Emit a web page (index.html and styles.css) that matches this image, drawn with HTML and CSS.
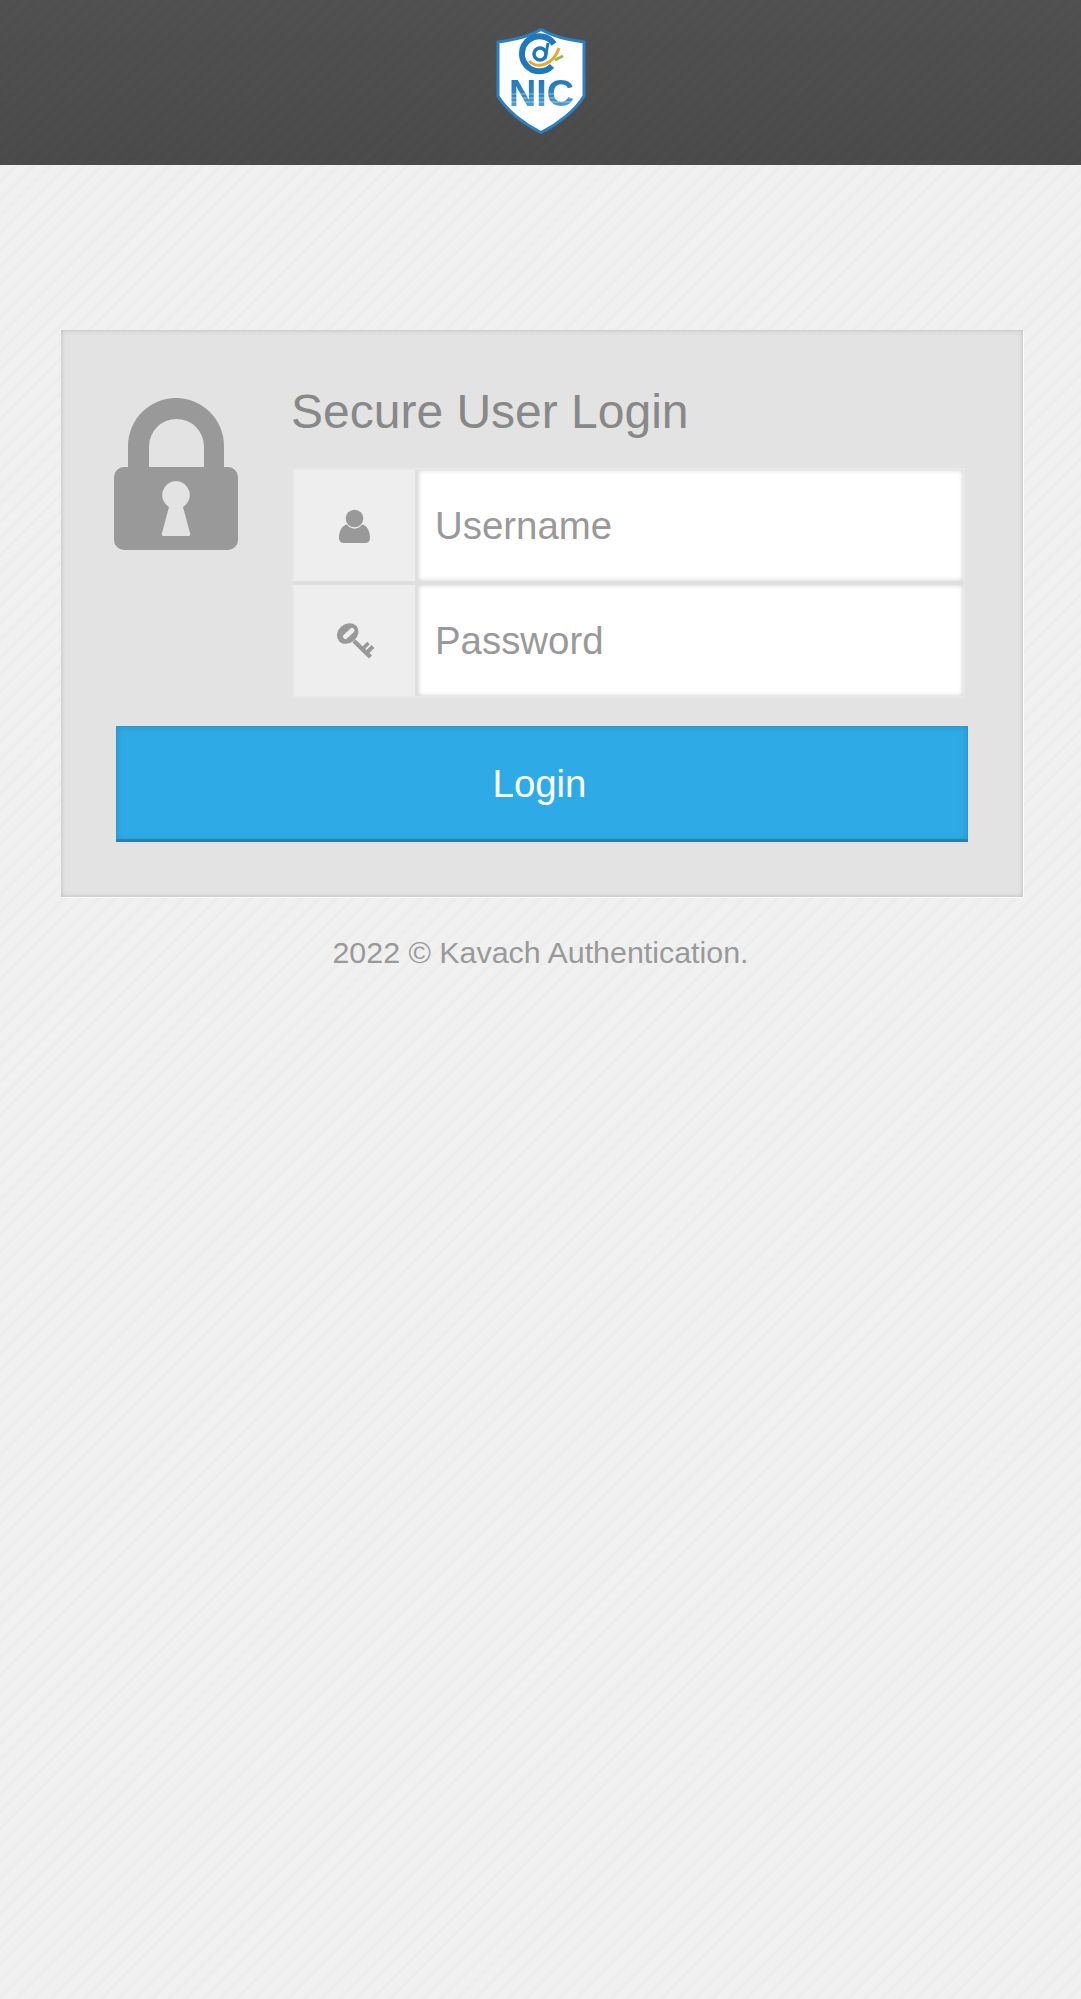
FILE: index.html
```html
<!DOCTYPE html>
<html lang="en">

<head>
    <meta charset="UTF-8">
    <meta name="viewport" content="width=device-width, initial-scale=1.0">
    <title>Kavach Authentication</title>
    <link rel="stylesheet" href="styles.css">
</head>

<body>
    <header class="topbar">
        <svg class="logo" viewBox="0 0 90 106" width="90" height="106">
            <defs>
                <linearGradient id="nicfill" x1="0" y1="0" x2="0" y2="1">
                    <stop offset="0" stop-color="#1f74b8"/>
                    <stop offset="0.55" stop-color="#2f86c6"/>
                    <stop offset="1" stop-color="#6fb0de"/>
                </linearGradient>
            </defs>
            <path d="M45 1.500 C56 8 72 12 88 14 V68 C80 82 62 96 45 104.500 C28 96 10 82 2 68 V14 C18 12 34 8 45 1.500 Z" fill="#fff" stroke="#2a80c0" stroke-width="3"/>
            <g fill="none">
                <path d="M58 16 A17.500 17.500 0 1 0 56 38" stroke="#1e78bd" stroke-width="6"/>
                <circle cx="44" cy="26" r="6" stroke="#1e78bd" stroke-width="3.500"/>
                <path d="M52 15 L49 31" stroke="#1e78bd" stroke-width="3"/>
                <path d="M33 33 C42 42 58 36 63 20" stroke="#e8a92c" stroke-width="3"/>
                <path d="M59 32 L67 28" stroke="#8cc04a" stroke-width="3"/>
            </g>
            <text class="logo-text" x="13" y="78" textLength="65" lengthAdjust="spacingAndGlyphs" fill="url(#nicfill)">NIC</text>
            <path d="M10 66 H80 M10 70 H80 M10 74 H80" stroke="#fff" stroke-width=".8" opacity=".6"/>
        </svg>
    </header>

    <main class="wrap">
        <form class="card">
            <div class="card-top">
                <svg class="lock" viewBox="0 0 125 152" width="125" height="152">
                    <path d="M14 70 V48 A48 48 0 0 1 110 48 V70 H90 V48.500 A27.500 27.500 0 0 0 35 48.500 V70 Z" fill="#999"/>
                    <path fill-rule="evenodd" fill="#999" d="M10 69 H114 A10 10 0 0 1 124 79 V142 A10 10 0 0 1 114 152 H10 A10 10 0 0 1 0 142 V79 A10 10 0 0 1 10 69 Z M62 83 A14 14 0 0 0 55 109 L48 135 A2 2 0 0 0 50 138 H74 A2 2 0 0 0 76 135 L69 109 A14 14 0 0 0 62 83 Z"/>
                </svg>
                <div class="fields">
                    <h1 class="title">Secure User Login</h1>
                    <div class="row">
                        <span class="addon">
                            <svg viewBox="0 0 31 34" width="31" height="34">
                                <circle cx="15.500" cy="9.500" r="8.800" fill="#999"/>
                                <path d="M8 15.500 C11 21 20 21 23 15.500 C28 16.500 31 22 31 29 C31 32 29 34 26 34 H5 C2 34 0 32 0 29 C0 22 3 16.500 8 15.500 Z" fill="#999"/>
                            </svg>
                        </span>
                        <input class="field" type="text" placeholder="Username">
                    </div>
                    <div class="row">
                        <span class="addon">
                            <svg viewBox="0 0 38 36" width="38" height="36">
                                <ellipse cx="11.700" cy="10.500" rx="11.500" ry="9.500" transform="rotate(-40 11.700 10.500)" fill="#999"/>
                                <path d="M9.500 13.500 L16 7.500" stroke="#eee" stroke-width="5" stroke-linecap="round"/>
                                <g fill="none" stroke="#999">
                                    <path d="M18 18 L34.500 34" stroke-width="4.500"/>
                                    <path d="M27.500 25 L32.500 20" stroke-width="3.500"/>
                                    <path d="M31.500 29 L37 23.500" stroke-width="4"/>
                                </g>
                            </svg>
                        </span>
                        <input class="field" type="password" placeholder="Password">
                    </div>
                </div>
            </div>
            <button class="login-btn" type="button">Login</button>
        </form>
        <p class="copy">2022 © Kavach Authentication.</p>
    </main>
</body>

</html>
```

FILE: styles.css
```css
html, body {
    height: 100%;
}

body {
    margin: 0;
    font-family: "Liberation Sans", Arial, sans-serif;
    background-color: #efefef;
    background-image: repeating-linear-gradient(135deg, #f1f1f1 0, #f0f0f0 6px, #ececec 9px, #f1f1f1 12px);
}

.topbar {
    height: 165px;
    display: flex;
    justify-content: center;
    align-items: flex-start;
    padding-top: 28px;
    box-sizing: border-box;
    background-color: #4d4d4d;
    background-image:
        repeating-linear-gradient(135deg, rgba(255, 255, 255, .008) 0, rgba(0, 0, 0, .012) 5px, rgba(255, 255, 255, .008) 10px),
        linear-gradient(#505050, #4a4a4a);
}

.logo {
    filter: blur(.5px);
}

.wrap {
    padding: 165px 58px 0 61px;
}

.card {
    background: #e3e3e3;
    box-shadow: inset 0 0 5px #b8b8b8, 1px 1px 0 #fafafa;
    padding: 50px 55px 55px 53px;
    box-sizing: border-box;
    height: 567px;
}

.card-top {
    display: flex;
}

.lock {
    margin: 18px 53px 0 0;
    flex-shrink: 0;
}

.fields {
    width: 673px;
}

.title {
    margin: 0 0 24px -1px;
    font-weight: normal;
    font-size: 48px;
    line-height: 64px;
    color: #888;
}

.row {
    display: flex;
    height: 115px;
    border: 2px solid #e8e8e8;
    border-bottom-color: #dfdfdf;
    box-sizing: border-box;
}

.row + .row {
    border-top-color: #dfdfdf;
    border-bottom-color: #e8e8e8;
}

.addon {
    width: 121px;
    flex-shrink: 0;
    display: flex;
    align-items: center;
    justify-content: center;
    background: #eeeeee;
    border-right: 3px solid #dfdfdf;
}

.field {
    flex: 1;
    min-width: 0;
    border: 0;
    outline: 0;
    padding: 0 16px 0 17px;
    font-family: inherit;
    font-size: 38.4px;
    color: #333;
    background: #fff;
    box-shadow: inset 0 0 5px #cccccc;
}

.field::placeholder {
    color: #999;
    opacity: 1;
}

.login-btn {
    display: block;
    width: 852px;
    height: 116px;
    margin: 28px 0 0 2px;
    padding: 0 5px 0 0;
    border: 0;
    background: #2eabe6;
    box-shadow: inset 0 -3px 1px #2681b1, inset 0 0 0 1px #2c98d0, inset 0 0 8px #2790c6;
    color: #fff;
    font-family: inherit;
    font-size: 38.4px;
}

.copy {
    margin: 38px 0 0;
    padding-right: 3px;
    text-align: center;
    font-size: 30.4px;
    color: #999;
}

.logo-text {
    font-family: "Liberation Sans", Arial, sans-serif;
    font-weight: bold;
    font-size: 36px;
}
```
